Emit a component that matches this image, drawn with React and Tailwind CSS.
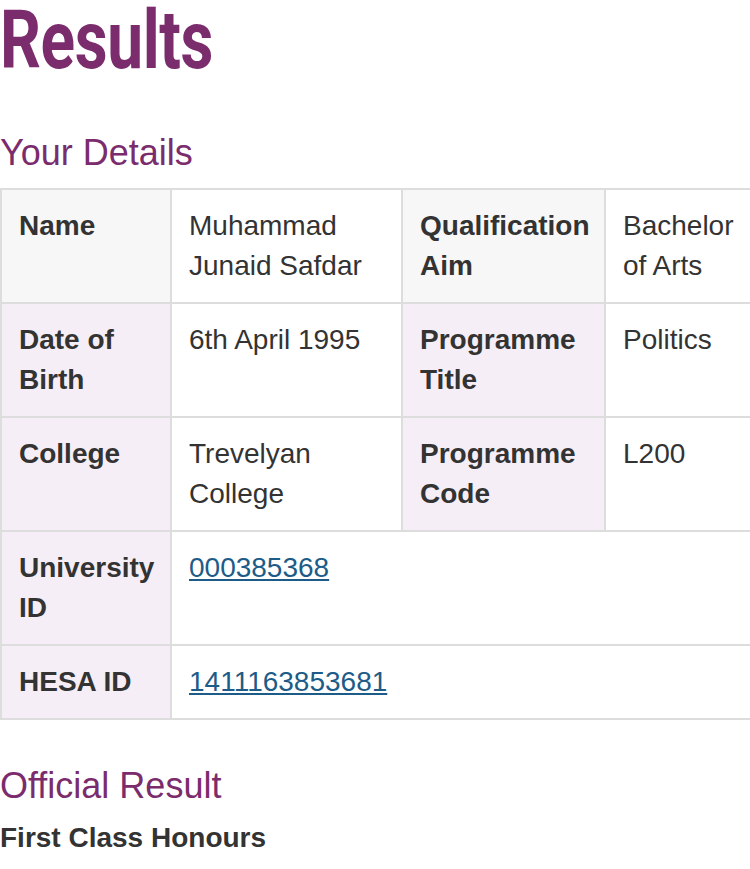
import React from 'react';

const rows = [
  [
    { label: 'Name', value: 'Muhammad Junaid Safdar' },
    { label: 'Qualification Aim', value: 'Bachelor of Arts' },
  ],
  [
    { label: 'Date of Birth', value: '6th April 1995' },
    { label: 'Programme Title', value: 'Politics' },
  ],
  [
    { label: 'College', value: 'Trevelyan College' },
    { label: 'Programme Code', value: 'L200' },
  ],
];

const idRows = [
  { label: 'University ID', value: '000385368' },
  { label: 'HESA ID', value: '1411163853681' },
];

const cell = 'border-2 border-[#dddddd] px-[17px] py-[16px] align-top leading-[40px]';

export default function App() {
  return (
    <div className="min-h-screen bg-white font-['Liberation_Sans',Arial,sans-serif] text-[28px] text-[#333333]">
      <h1 className="h-[90px] pr-4">
        <span className="inline-block origin-left scale-x-[0.78] font-['Roboto',sans-serif] text-[82px] font-bold leading-[80px] tracking-[-0.5px] text-[#7b2c6d]">
          Results
        </span>
      </h1>

      <h2 className="mt-[38px] text-[36px] font-normal leading-[50px] text-[#7b2c6d]">Your Details</h2>

      <table className="mt-[10px] w-[750px] table-fixed border-collapse">
        <colgroup>
          <col className="w-[170px]" />
          <col className="w-[231px]" />
          <col className="w-[203px]" />
          <col className="w-[146px]" />
        </colgroup>
        <tbody>
          {rows.map((row, i) => (
            <tr key={i}>
              {row.map((item) => (
                <React.Fragment key={item.label}>
                  <th className={`${cell} text-left font-bold ${i === 0 ? 'bg-[#f7f7f7]' : 'bg-[#f6eef6]'}`}>{item.label}</th>
                  <td className={`${cell} bg-white`}>{item.value}</td>
                </React.Fragment>
              ))}
            </tr>
          ))}
          {idRows.map((item) => (
            <tr key={item.label}>
              <th className={`${cell} bg-[#f6eef6] text-left font-bold`}>{item.label}</th>
              <td colSpan={3} className={`${cell} bg-white`}>
                <a href="#" className="text-[#1d5c88] underline">
                  {item.value}
                </a>
              </td>
            </tr>
          ))}
        </tbody>
      </table>

      <h2 className="mt-[41px] text-[36px] font-normal leading-[50px] text-[#7b2c6d]">Official Result</h2>
      <p className="mt-[7px] font-bold leading-[40px]">First Class Honours</p>
    </div>
  );
}
